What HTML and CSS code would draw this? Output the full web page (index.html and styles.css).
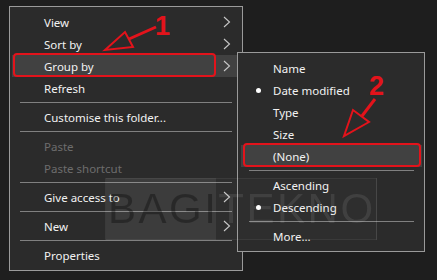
FILE: index.html
```html
<!DOCTYPE html>
<html lang="en">
<head>
    <meta charset="UTF-8">
    <meta name="viewport" content="width=device-width, initial-scale=1.0">
    <title>Group by menu</title>
    <link rel="stylesheet" href="styles.css">
</head>
<body>
    <div class="screen">
        <!-- Main context menu -->
        <div class="menu main-menu">
            <div class="item"><span>View</span><svg class="chev" viewBox="0 0 8 12"><path d="M1 1 L6.5 6 L1 11"/></svg></div>
            <div class="item"><span>Sort by</span><svg class="chev" viewBox="0 0 8 12"><path d="M1 1 L6.5 6 L1 11"/></svg></div>
            <div class="item active"><span>Group by</span><svg class="chev" viewBox="0 0 8 12"><path d="M1 1 L6.5 6 L1 11"/></svg></div>
            <div class="item"><span>Refresh</span></div>
            <div class="sep"></div>
            <div class="item"><span>Customise this folder...</span></div>
            <div class="sep"></div>
            <div class="item disabled"><span>Paste</span></div>
            <div class="item disabled"><span>Paste shortcut</span></div>
            <div class="sep"></div>
            <div class="item"><span>Give access to</span><svg class="chev" viewBox="0 0 8 12"><path d="M1 1 L6.5 6 L1 11"/></svg></div>
            <div class="sep"></div>
            <div class="item"><span>New</span><svg class="chev" viewBox="0 0 8 12"><path d="M1 1 L6.5 6 L1 11"/></svg></div>
            <div class="sep"></div>
            <div class="item"><span>Properties</span></div>
        </div>

        <!-- Group by submenu -->
        <div class="menu sub-menu">
            <div class="item"><span>Name</span></div>
            <div class="item checked"><span>Date modified</span></div>
            <div class="item"><span>Type</span></div>
            <div class="item"><span>Size</span></div>
            <div class="item active"><span>(None)</span></div>
            <div class="sep"></div>
            <div class="item"><span>Ascending</span></div>
            <div class="item checked"><span>Descending</span></div>
            <div class="sep"></div>
            <div class="item"><span>More...</span></div>
        </div>

        <div class="watermark"><span class="wm-text">BAGITEKNO</span></div>

        <div class="mark mark-group"></div>
        <div class="mark mark-none"></div>

        <svg class="notes" viewBox="0 0 437 280">
            <line x1="156" y1="27" x2="129" y2="39"/>
            <polygon points="105,50 125,32 133,47"/>
            <text x="155" y="35">1</text>
            <line x1="375" y1="99" x2="362" y2="116"/>
            <polygon points="344,136 353,110 369,122"/>
            <text x="369" y="95">2</text>
        </svg>
    </div>
</body>
</html>
```

FILE: styles.css
```css
body {
    margin: 0;
    background: #1e1e1e;
    font-family: "Noto Sans", "Open Sans", sans-serif;
    font-size: 11.5px;
    color: #f2f2f2;
}
.screen {
    position: relative;
    width: 437px;
    height: 280px;
    padding: 6px 0 0 9px;
    box-sizing: border-box;
    overflow: hidden;
}
.menu {
    background: #2b2b2b;
    border: 1px solid #9a9a9a;
    box-sizing: border-box;
    padding: 4px 2px 3px 2px;
}
.main-menu {
    width: 234px;
    height: 265px;
}
.sub-menu {
    position: absolute; /* submenu pops out over the main menu */
    left: 237px;
    top: 52px;
    width: 188px;
    height: 200px;
    padding-left: 3px;
}
.item {
    position: relative;
    height: 22px;
    display: flex;
    align-items: center;
    padding-left: 32px;
    padding-right: 9px;
    white-space: nowrap;
}
.item span {
    flex: 1;
}
.item.active {
    background: #414141;
}
.item.disabled {
    color: #6d6d6d;
}
.item.checked::before {
    content: "";
    position: absolute;
    left: 15px;
    top: 9px;
    width: 5px;
    height: 5px;
    border-radius: 50%;
    background: #ffffff;
}
.chev {
    width: 8px;
    height: 12px;
    fill: none;
    stroke: #c8c8c8;
    stroke-width: 1.1;
}
.sep {
    height: 7px;
    display: flex;
    align-items: center;
    margin: 0 8px;
}
.sep::after {
    content: "";
    flex: 1;
    height: 1px;
    background: #808080;
}
.watermark {
    position: absolute;
    left: 105px;
    top: 178px;
    width: 272px;
    height: 62px;
    box-sizing: border-box;
    border: 1px solid rgba(255, 255, 255, 0.06);
    background: linear-gradient(to right, rgba(255, 255, 255, 0.08) 0 110px, rgba(255, 255, 255, 0.015) 110px);
}
.wm-text {
    display: block;
    padding-left: 2px;
    font-family: "Liberation Sans", Arial, sans-serif;
    font-size: 42px;
    letter-spacing: 2.5px;
    line-height: 60px;
    background: linear-gradient(to right, rgba(0, 0, 0, 0.32) 0 110px, rgba(255, 255, 255, 0.09) 110px);
    -webkit-background-clip: text;
    background-clip: text;
    color: transparent;
}
.mark {
    position: absolute;
    border: 2px solid #e3131b;
    border-radius: 4px;
    box-sizing: border-box;
}
.mark-group {
    left: 13px;
    top: 53px;
    width: 203px;
    height: 24px;
}
.mark-none {
    left: 243px;
    top: 143px;
    width: 178px;
    height: 24px;
}
.notes {
    position: absolute;
    left: 0;
    top: 0;
    width: 437px;
    height: 280px;
}
.notes line {
    stroke: #e3131b;
    stroke-width: 3;
}
.notes polygon {
    fill: none;
    stroke: #e3131b;
    stroke-width: 2;
}
.notes text {
    fill: #e3131b;
    font-family: "Liberation Sans", Arial, sans-serif;
    font-weight: bold;
    font-size: 27px;
}
```
